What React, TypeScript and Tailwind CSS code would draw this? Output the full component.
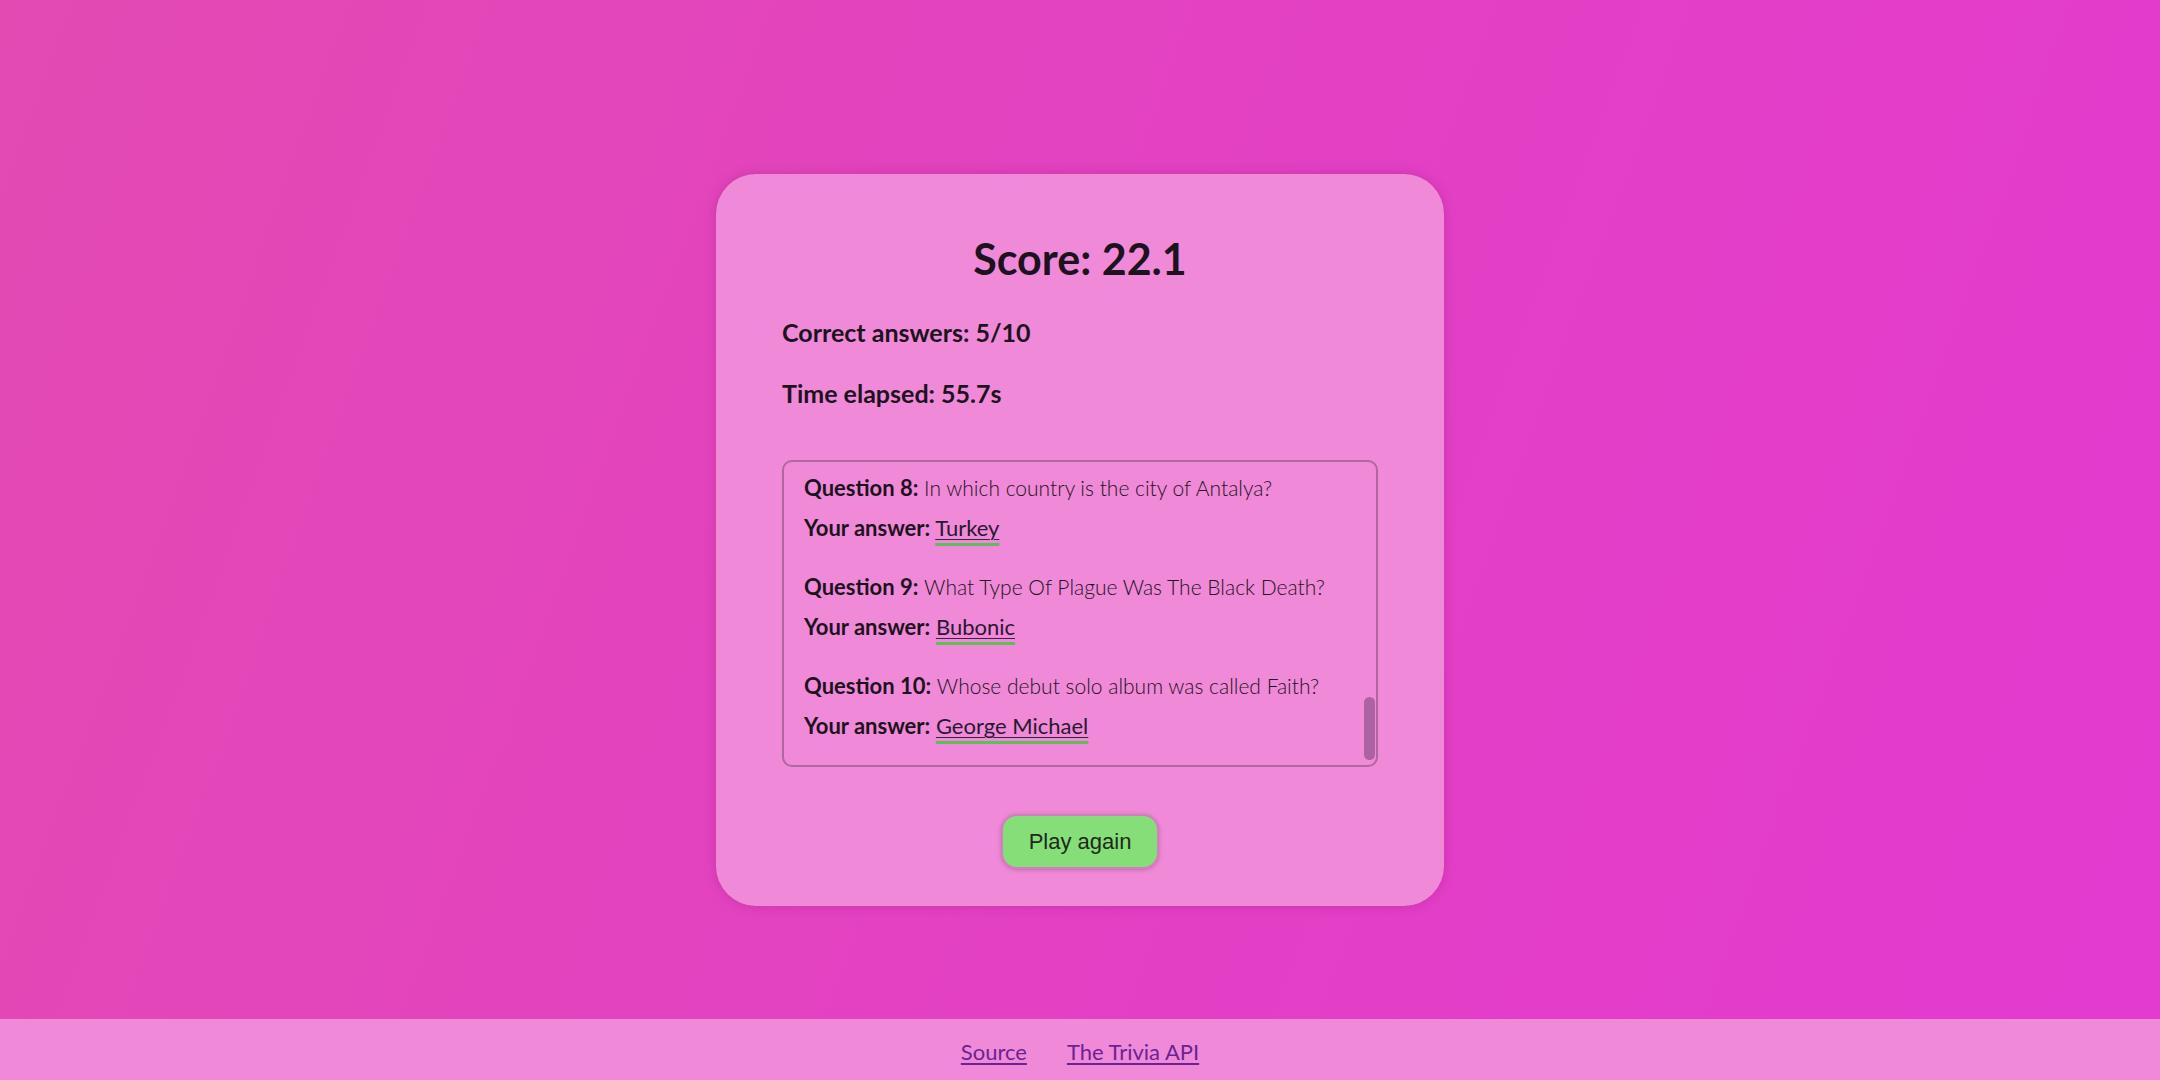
import React, { useLayoutEffect, useRef } from 'react';

type Item = {
  n: number;
  question: string;
  answer: string;
  correct?: string;
};

const items: Item[] = [
  { n: 1, question: 'Which planet is known as the Red Planet?', answer: 'Mars' },
  { n: 2, question: 'What is the capital city of Australia?', answer: 'Sydney', correct: 'Canberra' },
  { n: 3, question: "Which element has the chemical symbol 'Fe'?", answer: 'Iron' },
  { n: 4, question: 'In which year did the Berlin Wall fall?', answer: '1991', correct: '1989' },
  {
    n: 5,
    question: 'Who painted the ceiling of the Sistine Chapel in Vatican City during the early sixteenth century?',
    answer: 'Raphael',
    correct: 'Michelangelo',
  },
  {
    n: 6,
    question: 'Which of these animals is the largest species of penguin that is still living today?',
    answer: 'King Penguin',
    correct: 'Emperor Penguin',
  },
  {
    n: 7,
    question: 'Which river is the longest river in South America when measured from its most distant source?',
    answer: 'Paraná',
    correct: 'Amazon',
  },
  { n: 8, question: 'In which country is the city of Antalya?', answer: 'Turkey' },
  { n: 9, question: 'What Type Of Plague Was The Black Death?', answer: 'Bubonic' },
  { n: 10, question: 'Whose debut solo album was called Faith?', answer: 'George Michael' },
];

function Answer({ text, good }: { text: string; good: boolean }) {
  return (
    <span
      className={
        good
          ? 'underline decoration-[#5cbf5a] decoration-[3px] underline-offset-[7px]'
          : 'underline decoration-[#e0453f] decoration-[3px] underline-offset-[7px]'
      }
    >
      <span className="underline decoration-[#3a2340] decoration-1 underline-offset-[3px]">{text}</span>
    </span>
  );
}

export default function App() {
  const listRef = useRef<HTMLDivElement>(null);

  useLayoutEffect(() => {
    const el = listRef.current;
    if (el) el.scrollTop = el.scrollHeight;
  }, []);

  return (
    <div className="h-[1080px] flex flex-col bg-[linear-gradient(110deg,#e34ab2_0%,#e340c4_55%,#e33ad0_100%)] font-['Lato','Noto_Sans',sans-serif] text-[#1d1220]">
      {/* Result card */}
      <main className="flex-1 flex justify-center pt-[174px]">
        <div className="w-[728px] h-[732px] rounded-[40px] bg-[#f08ad8] shadow-[0_0_12px_rgba(120,20,90,0.25)] px-[66px] pt-[58px] pb-[37px] flex flex-col">
          <h1 className="text-[43px] leading-[53px] font-bold text-center">Score: 22.1</h1>
          <h3 className="mt-[32px] text-[25px] leading-[31px] font-bold">Correct answers: 5/10</h3>
          <h3 className="mt-[30px] text-[25px] leading-[31px] font-bold">Time elapsed: 55.7s</h3>

          {/* Answer list with its scroll thumb */}
          <div className="relative mt-[51px] h-[307px] rounded-[10px] border-2 border-[#b0669f]">
            <div
              ref={listRef}
              className="h-full overflow-hidden pl-[20px] pr-[20px] pt-[20px] pb-[26px] flex flex-col gap-[33px] text-[22px] leading-[26px]"
            >
              {items.map((q) => (
                <div key={q.n} className="flex flex-col gap-[14px]">
                  <p className="text-[#2a1830]">
                    <b className="font-bold text-[#1d1220]">Question {q.n}:</b>{' '}
                    <span className="text-[21px] font-light text-[#1f1224]">{q.question}</span>
                  </p>
                  <p className="text-[#2a1830]">
                    <b className="font-bold text-[#1d1220]">Your answer:</b>{' '}
                    <Answer text={q.answer} good={!q.correct} />
                  </p>
                  {q.correct && (
                    <p className="text-[#2a1830]">
                      <b className="font-bold text-[#1d1220]">Correct answer:</b> <Answer text={q.correct} good />
                    </p>
                  )}
                </div>
              ))}
            </div>
            <div className="absolute right-[1px] bottom-[5px] w-[11px] h-[63px] rounded-full bg-[#ad63a3]" />
          </div>

          <div className="mt-[47px] flex justify-center">
            <button className="w-[158px] h-[55px] rounded-[16px] border-2 border-[#d27fc0] bg-[#86de78] shadow-[0_1px_4px_rgba(120,20,90,0.3)] font-['Liberation_Sans',Arial,sans-serif] text-[22px] text-[#1d2a1b]">
              Play again
            </button>
          </div>
        </div>
      </main>

      {/* Footer */}
      <footer className="h-[61px] bg-[#f08ad8] flex items-center justify-center gap-[40px] pt-[4px] text-[22px]">
        <a href="#" className="text-[#6b2393] underline underline-offset-[3px]">
          Source
        </a>
        <a href="#" className="text-[#6b2393] underline underline-offset-[3px]">
          The Trivia API
        </a>
      </footer>
    </div>
  );
}
